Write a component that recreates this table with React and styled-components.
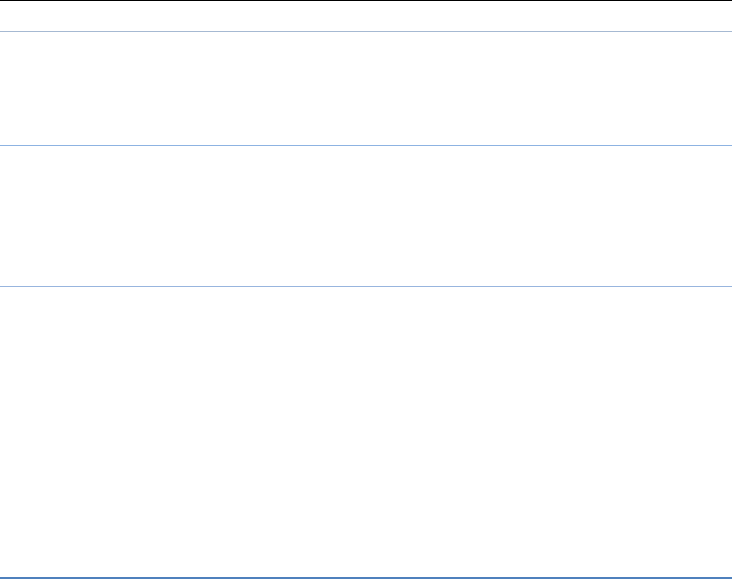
import React from 'react'
import styled, { createGlobalStyle } from 'styled-components';

const GlobalStyle = createGlobalStyle`
  html, body {
    margin: 0;
    padding: 0;
    background: #fff;
    font-family: "Liberation Sans", Arial, sans-serif;
  }
`;

const Sheet = styled.div`
  width: 732px;
  height: 579px;
  display: flex;
  flex-direction: column;
  border-top: 1px solid #000;
  box-sizing: border-box;
`;

const Row = styled.div`
  height: ${p => p.h}px;
  border-bottom: ${p => p.line || 1}px solid ${p => p.color};
  flex-shrink: 0;
`;

function App() {
  return (
    <>
      <GlobalStyle />
      <Sheet>
        <Row h={30} color="#a6b9d2" />
        <Row h={113} color="#8db3e2" />
        <Row h={140} color="#98b5de" />
        <Row h={290} line={2} color="#4f81bd" />
      </Sheet>
    </>
  )
}

export default App
